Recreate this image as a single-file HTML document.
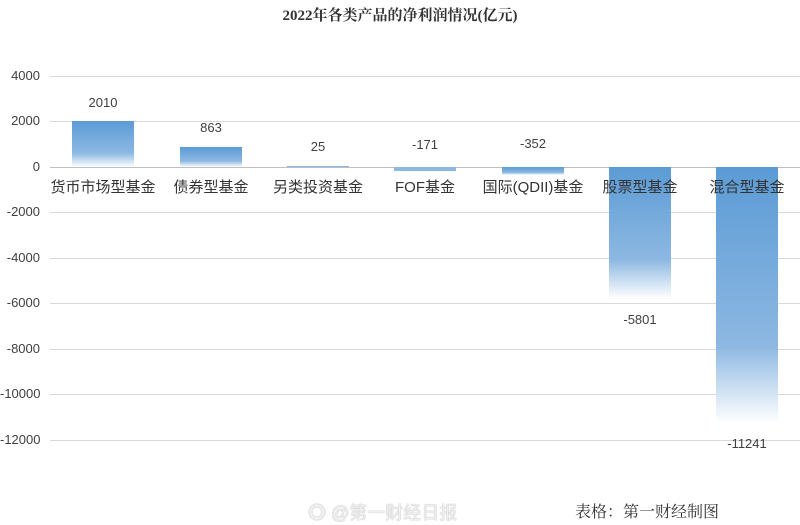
<!DOCTYPE html>
<html><head><meta charset="utf-8"><style>
body{margin:0;width:800px;height:525px;background:#fff;position:relative;overflow:hidden;font-family:"Liberation Sans","Noto Sans CJK SC",sans-serif;color:#404040}
.a{position:absolute}
.g{position:absolute;left:50px;width:750px;height:1px;background:#d9d9d9}
.y{position:absolute;left:0;width:40px;text-align:right;font-size:13px;color:#404040}
.b{position:absolute;width:62px;background:linear-gradient(#5b9bd5 0%,#8db8e2 70%,#fff 100%)}
.v{position:absolute;width:80px;text-align:center;font-size:13px}
.c{position:absolute;width:120px;text-align:center;font-size:15px;top:176px;color:#333}
</style></head><body>
<div class="a" style="left:0;width:800px;top:4px;text-align:center;font-size:15px;font-weight:bold;font-family:'Liberation Serif','Noto Serif CJK SC',serif;color:#333">2022年各类产品的净利润情况(亿元)</div>
<div class="g" style="top:76px"></div><div class="g" style="top:121px"></div><div class="g" style="top:167px;background:#bfbfbf"></div><div class="g" style="top:212px"></div><div class="g" style="top:258px"></div><div class="g" style="top:303px"></div><div class="g" style="top:349px"></div><div class="g" style="top:394px"></div><div class="g" style="top:440px"></div>
<div class="y" style="top:68px">4000</div><div class="y" style="top:113px">2000</div><div class="y" style="top:159px">0</div><div class="y" style="top:204px">-2000</div><div class="y" style="top:250px">-4000</div><div class="y" style="top:295px">-6000</div><div class="y" style="top:341px">-8000</div><div class="y" style="top:386px">-10000</div><div class="y" style="top:432px">-12000</div>
<div class="b" style="left:72px;top:121px;height:46px"></div>
<div class="b" style="left:180px;top:147px;height:20px"></div>
<div class="b" style="left:287px;top:166px;height:1px"></div>
<div class="b" style="left:394px;top:167px;height:4px;background:#8db8e2"></div>
<div class="b" style="left:502px;top:167px;height:8px"></div>
<div class="b" style="left:609px;top:167px;height:132px"></div>
<div class="b" style="left:716px;top:167px;height:256px"></div>
<div class="v" style="left:63px;top:95px">2010</div>
<div class="v" style="left:171px;top:120px">863</div>
<div class="v" style="left:278px;top:139px">25</div>
<div class="v" style="left:385px;top:137px">-171</div>
<div class="v" style="left:493px;top:136px">-352</div>
<div class="v" style="left:600px;top:312px">-5801</div>
<div class="v" style="left:707px;top:436px">-11241</div>
<div class="c" style="left:43px">货币市场型基金</div>
<div class="c" style="left:151px">债券型基金</div>
<div class="c" style="left:258px">另类投资基金</div>
<div class="c" style="left:365px">FOF基金</div>
<div class="c" style="left:473px">国际(QDII)基金</div>
<div class="c" style="left:580px">股票型基金</div>
<div class="c" style="left:687px">混合型基金</div>
<div class="a" style="left:308px;top:499px;font-size:18px;color:#f0f0f0;text-shadow:0 0 1px #888">◎ @第一财经日报</div>
<div class="a" style="left:575px;top:499px;font-size:16px;color:#333;font-family:'Liberation Serif','Noto Serif CJK SC',serif">表格：第一财经制图</div>
</body></html>
